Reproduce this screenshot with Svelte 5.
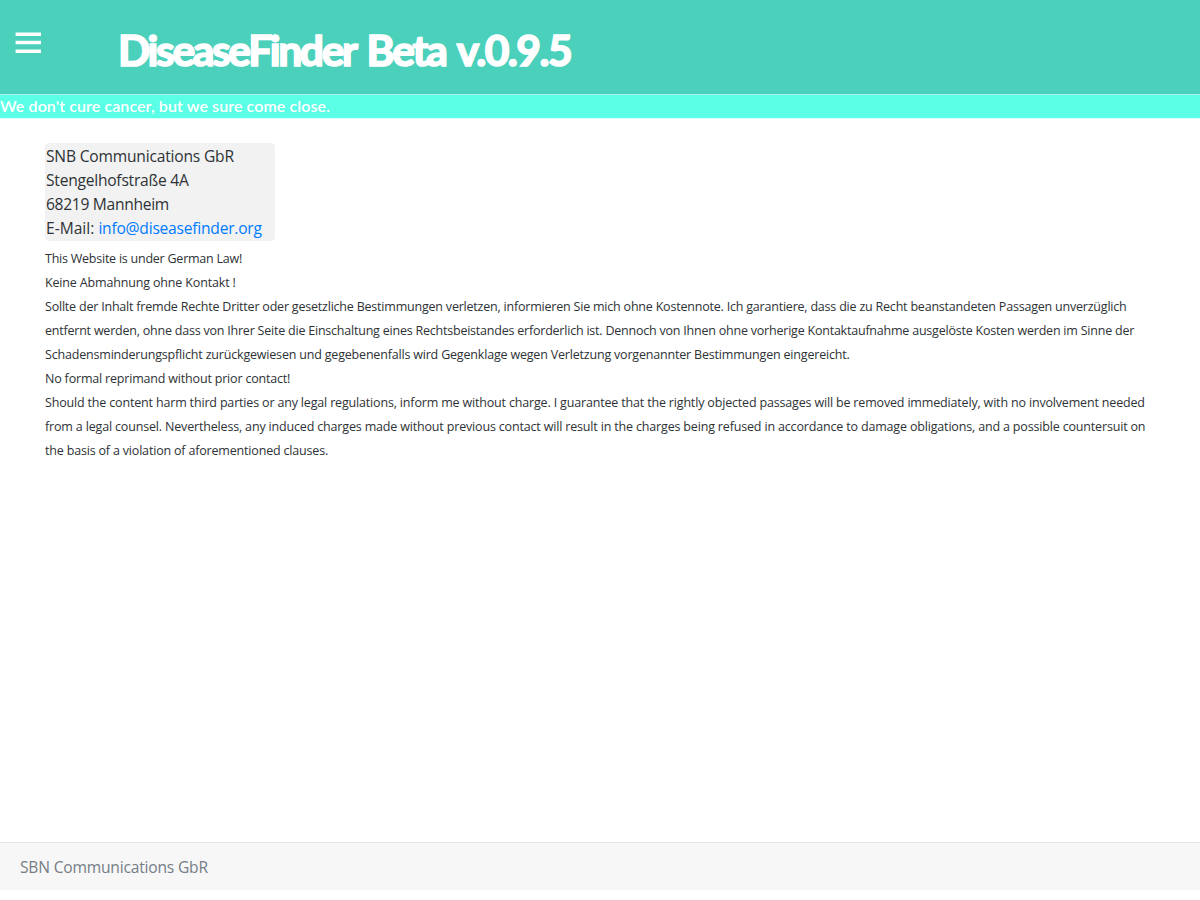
<script>
  const address = [
    ['SNB Communications GbR', -0.195],
    ['Stengelhofstraße 4A', -0.24],
    ['68219 Mannheim', -0.297]
  ];
  const legal = [
    ['This Website is under German Law!', -0.235],
    ['Keine Abmahnung ohne Kontakt !', -0.16],
    ['Sollte der Inhalt fremde Rechte Dritter oder gesetzliche Bestimmungen verletzen, informieren Sie mich ohne Kostennote. Ich garantiere, dass die zu Recht beanstandeten Passagen unverzüglich', -0.207],
    ['entfernt werden, ohne dass von Ihrer Seite die Einschaltung eines Rechtsbeistandes erforderlich ist. Dennoch von Ihnen ohne vorherige Kontaktaufnahme ausgelöste Kosten werden im Sinne der', -0.218],
    ['Schadensminderungspflicht zurückgewiesen und gegebenenfalls wird Gegenklage wegen Verletzung vorgenannter Bestimmungen eingereicht.', -0.187],
    ['No formal reprimand without prior contact!', -0.185],
    ['Should the content harm third parties or any legal regulations, inform me without charge. I guarantee that the rightly objected passages will be removed immediately, with no involvement needed', -0.17],
    ['from a legal counsel. Nevertheless, any induced charges made without previous contact will result in the charges being refused in accordance to damage obligations, and a possible countersuit on', -0.168],
    ['the basis of a violation of aforementioned clauses.', -0.18]
  ];
</script>

<header>
  <button aria-label="Menu">
    <svg width="27" height="23" viewBox="0 0 27 23" fill="#fff"><path d="M.6.4h25.4v3.6H.6zM.6 8.7h25.4v3.6H.6zM.6 17.4h25.4v3.6H.6z" /></svg>
  </button>
  <h1><span class="name">DiseaseFinder</span><span class="beta">Beta</span><span class="version">v.0.9.5</span></h1>
</header>
<div class="tagline">We don't cure cancer, but we sure come close.</div>
<main>
  <address>
    {#each address as [text, spacing]}
      <div style:letter-spacing="{spacing}px">{text}</div>
    {/each}
    <div><span>E-Mail:</span> <a href="mailto:info@diseasefinder.org">info@diseasefinder.org</a></div>
  </address>
  <div class="legal">
    {#each legal as [text, spacing]}
      <div style:letter-spacing="{spacing}px">{text}</div>
    {/each}
  </div>
</main>
<footer>SBN Communications GbR</footer>

<style>
  :global(body) { margin: 0; background: #fff; color: #2e3236; font: 15.6px/24px 'Open Sans', sans-serif; }
  header { height: 94px; display: flex; background: #4bd0bb; }
  button { display: flex; align-items: flex-start; border: 0; background: none; padding: 32px 0 0 15px; width: 118px; height: 86px; }
  h1 { margin: 20px 0 0; display: flex; gap: 11px; font: 700 42.5px/60px Lato, sans-serif; color: #fff; -webkit-text-stroke: 1.7px #fff; stroke-linejoin: round; }
  .name { letter-spacing: -2.345px; }
  .beta { letter-spacing: -2.05px; }
  .version { letter-spacing: -1.58px; }
  .tagline { height: 23px; border-top: 1px solid #a5f3e8; border-bottom: 1px solid #d2fff9; background: #5bffe6; color: #fff; font: 600 16px/21px Lato, sans-serif; letter-spacing: 0.095px; }
  main { padding: 23.5px 45px 0; height: 699.5px; }
  address { font-style: normal; width: 228px; padding: 1.5px 1px 0.5px; background: #f2f2f2; border-radius: 4px; }
  a { color: #007bff; text-decoration: none; letter-spacing: -0.23px; }
  .legal { font-size: 12.5px; margin-top: 6px; white-space: nowrap; }
  footer { height: 47px; border-top: 1px solid #e5e5e5; background: #f7f7f7; color: #757e86; padding-left: 20px; line-height: 49px; letter-spacing: -0.195px; }
</style>
